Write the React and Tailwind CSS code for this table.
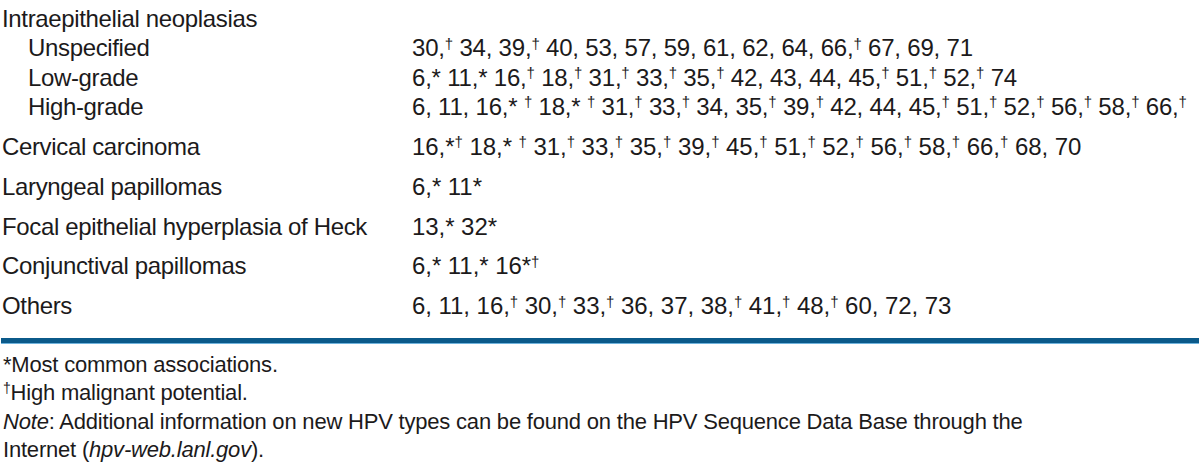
const rows = [
  {
    label: "Intraepithelial neoplasias",
    sub: [
      ["Unspecified", "30,† 34, 39,† 40, 53, 57, 59, 61, 62, 64, 66,† 67, 69, 71"],
      ["Low-grade", "6,* 11,* 16,† 18,† 31,† 33,† 35,† 42, 43, 44, 45,† 51,† 52,† 74"],
      ["High-grade", "6, 11, 16,* † 18,* † 31,† 33,† 34, 35,† 39,† 42, 44, 45,† 51,† 52,† 56,† 58,† 66,†"],
    ],
  },
  { label: "Cervical carcinoma", types: "16,*† 18,* † 31,† 33,† 35,† 39,† 45,† 51,† 52,† 56,† 58,† 66,† 68, 70" },
  { label: "Laryngeal papillomas", types: "6,* 11*" },
  { label: "Focal epithelial hyperplasia of Heck", types: "13,* 32*" },
  { label: "Conjunctival papillomas", types: "6,* 11,* 16*†" },
  { label: "Others", types: "6, 11, 16,† 30,† 33,† 36, 37, 38,† 41,† 48,† 60, 72, 73" },
];

function Marks({ text }) {
  // daggers are set small and raised, like the printed table
  return text.split(/(†)/).map((part, i) =>
    part === "†" ? (
      <sup key={i} className="text-[15px]">†</sup>
    ) : (
      <span key={i}>{part}</span>
    )
  );
}

export default function App() {
  return (
    <div
      className="w-[1200px] h-[470px] bg-white text-[#1c1a1b] text-[24px] overflow-hidden"
      style={{ fontFamily: '"Liberation Sans", Arial, sans-serif' }}
    >
      <div className="pl-[2px]">
        {rows.map((r) =>
          r.sub ? (
            <div key={r.label} className="pt-[4px] pb-[5.5px] leading-[29.3px]">
              <div className="tracking-[-0.35px]">{r.label}</div>
              {r.sub.map(([name, types]) => (
                <div key={name} className="grid grid-cols-[410px_1fr]">
                  <div className="pl-[26px] tracking-[-0.35px]">{name}</div>
                  <div className="whitespace-nowrap tracking-[-0.2px]">
                    <Marks text={types} />
                  </div>
                </div>
              ))}
            </div>
          ) : (
            <div key={r.label} className="grid grid-cols-[410px_1fr] py-[5.25px] leading-[29.3px]">
              <div className="tracking-[-0.35px]">{r.label}</div>
              <div className="whitespace-nowrap tracking-[-0.05px]">
                <Marks text={r.types} />
              </div>
            </div>
          )
        )}
      </div>

      <div className="mt-[12px] mx-[1px] border-b border-[#6fb3dd] h-[6px] bg-[#0b5a8a]" />

      <div className="pl-[3px] pt-[7px] text-[22px] leading-[28.5px] tracking-[-0.2px]">
        <div>*Most common associations.</div>
        <div>
          <sup className="text-[14px]">†</sup>High malignant potential.
        </div>
        <div>
          <i>Note</i>: Additional information on new HPV types can be found on the HPV Sequence Data Base through the
        </div>
        <div>
          Internet (<i>hpv-web.lanl.gov</i>).
        </div>
      </div>
    </div>
  );
}
